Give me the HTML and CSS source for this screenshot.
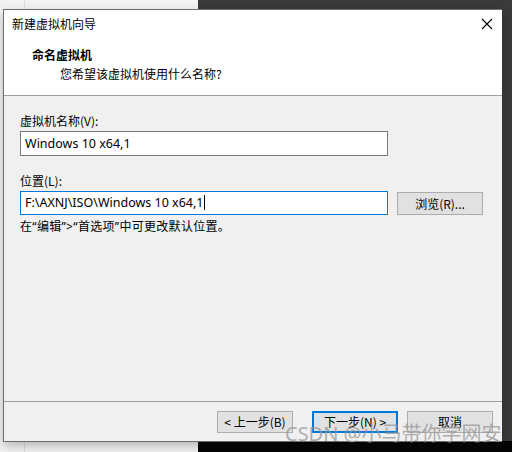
FILE: index.html
```html
<html>
<head>
  <meta charset="UTF-8">
  <title>新建虚拟机向导</title>
  <link rel="stylesheet" href="styles.css">
</head>
<body>
  <div class="desk-left"></div>
  <div class="desk-bottom"></div>

  <div class="dialog">
    <div class="titlebar">
      <span class="title">新建虚拟机向导</span>
      <svg class="close" width="12" height="12" viewBox="0 0 12 12">
        <path d="M1 1 L11 11 M11 1 L1 11" stroke="#000" stroke-width="1.1" fill="none"/>
      </svg>
    </div>

    <div class="header">
      <div class="head-title">命名虚拟机</div>
      <div class="head-sub">您希望该虚拟机使用什么名称?</div>
    </div>

    <div class="body">
      <div class="label">虚拟机名称(V):</div>
      <div class="field">Windows 10 x64,1</div>

      <div class="label label-loc">位置(L):</div>
      <div class="row">
        <div class="field field-focus">F:\AXNJ\ISO\Windows 10 x64,1<span class="caret"></span></div>
        <div class="btn btn-browse">浏览(R)...</div>
      </div>
      <div class="hint">在“编辑”&gt;“首选项”中可更改默认位置。</div>
    </div>

    <div class="footer">
      <div class="btn btn-back">&lt; 上一步(B)</div>
      <div class="btn btn-next">下一步(N) &gt;</div>
      <div class="btn btn-cancel">取消</div>
    </div>
  </div>

  <div class="watermark">CSDN @小马带你学网安</div>
</body>
</html>
```

FILE: styles.css
```css
html, body {
  margin: 0;
  height: 100%;
  overflow: hidden;
}
body {
  background: #3a3a3a;
  position: relative;
  font-family: "Noto Sans", "Noto Sans CJK SC", sans-serif;
  font-size: 12px;
  color: #000;
}

/* desktop behind the dialog */
.desk-left {
  position: absolute;
  left: 0;
  top: 0;
  width: 198px;
  height: 100%;
  background: #f3f3f3;
}
.desk-left:after {
  content: '';
  position: absolute;
  left: 24px;
  top: 0;
  bottom: 0;
  width: 1px;
  background: #dcdcdc;
}
.desk-bottom {
  position: absolute;
  left: 198px;
  right: 0;
  bottom: 0;
  height: 11px;
  background: #050505;
}

.dialog {
  position: relative;
  margin: 9px 0 0 3px;
  width: 499px;
  height: 433px;
  box-sizing: border-box;
  border: 1px solid #6e6e6e;
  border-right: 0;
  background: #f0f0f0;
  display: flex;
  flex-direction: column;
  box-shadow: 0 4px 10px rgba(0, 0, 0, .25);
}

.titlebar {
  height: 28px;
  background: #fff;
  display: flex;
  align-items: center;
  justify-content: space-between;
  padding: 0 9px 0 8px;
}
.title {
  font-family: "Noto Sans CJK SC", sans-serif;
  line-height: 16px;
}
.close {
  display: block;
}

.header {
  height: 58px;
  background: #fff;
  border-bottom: 1px solid #a0a0a0;
  box-sizing: border-box;
  padding: 9px 0 0 28px;
}
.head-title {
  font-family: "Noto Sans CJK SC", sans-serif;
  font-weight: bold;
  line-height: 16px;
}
.head-sub {
  font-family: "Noto Sans CJK SC", sans-serif;
  line-height: 16px;
  margin: 3px 0 0 28px;
}

.body {
  flex: 1;
  padding: 17px 0 0 16px;
}
.label {
  font-family: "Noto Sans CJK SC", "Noto Sans", sans-serif;
  line-height: 16px;
  height: 16px;
  margin-bottom: 2px;
}
.label-loc {
  margin-top: 17px;
}
.field {
  width: 368px;
  height: 25px;
  box-sizing: border-box;
  border: 1px solid #7a7a7a;
  background: #fff;
  padding: 0 4px;
  line-height: 23px;
  font-size: 12.5px;
  white-space: nowrap;
}
.field-focus {
  border-color: #0078d7;
  height: 24px;
  line-height: 22px;
}
.caret {
  display: inline-block;
  width: 1px;
  height: 15px;
  background: #000;
  vertical-align: -3px;
  margin-left: 1px;
}
.row {
  display: flex;
  align-items: flex-start;
  gap: 9px;
}

.btn {
  box-sizing: border-box;
  height: 23px;
  background: #e1e1e1;
  border: 1px solid #adadad;
  font-family: "Noto Sans CJK SC", "Noto Sans", sans-serif;
  line-height: 21px;
  text-align: center;
}
.btn-browse {
  width: 86px;
  margin-top: 1px;
}

.hint {
  font-family: "Noto Sans", "Noto Sans CJK SC", sans-serif;
  line-height: 16px;
  margin-top: 4px;
  letter-spacing: 0.3px;
}

.footer {
  height: 40px;
  border-top: 1px solid #a0a0a0;
  box-sizing: border-box;
  display: flex;
  align-items: flex-start;
  padding: 9px 0 0 213px;
}
.footer .btn {
  height: 22px;
  line-height: 20px;
}
.btn-back {
  width: 76px;
}
.btn-next {
  width: 86px;
  margin-left: 19px;
  border: 2px solid #0078d7;
  line-height: 18px !important;
}
.btn-cancel {
  width: 86px;
  margin-left: 9px;
}

.watermark {
  position: absolute;
  left: 285px;
  top: 422px;
  font-family: "Noto Sans", "Noto Sans CJK SC", sans-serif;
  font-size: 20px;
  line-height: 24px;
  color: rgba(150, 150, 150, .75);
  white-space: nowrap;
}
```
